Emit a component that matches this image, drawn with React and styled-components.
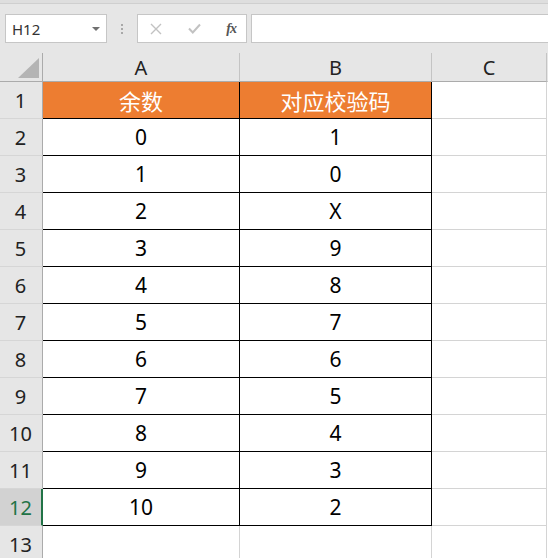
import styled, { createGlobalStyle } from 'styled-components';

const GlobalStyle = createGlobalStyle`
  html, body {
    margin: 0;
    padding: 0;
    background: #e6e6e6;
    overflow: hidden;
  }
  body {
    font-family: "Noto Sans", "Noto Sans CJK SC", sans-serif;
  }
`;

const Page = styled.div`
  width: 548px;
  height: 558px;
  background: #e6e6e6;
  overflow: hidden;
`;

const TopStrip = styled.div`
  height: 3px;
  background: #dedede;
  border-bottom: 1px solid #cfcfcf;
`;

const FormulaBar = styled.div`
  display: flex;
  align-items: center;
  height: 29px;
  padding: 10px 0 10px 5px;
`;

const NameBox = styled.div`
  box-sizing: border-box;
  width: 102px;
  height: 29px;
  background: #fff;
  border: 1px solid #c6c6c6;
  display: flex;
  align-items: center;
  justify-content: space-between;
  padding: 0 6px 0 6px;
  font-size: 15px;
  color: #333;
`;

const Caret = styled.span`
  width: 0;
  height: 0;
  border-left: 4px solid transparent;
  border-right: 4px solid transparent;
  border-top: 4px solid #707070;
`;

const Dots = styled.div`
  width: 30px;
  display: flex;
  flex-direction: column;
  align-items: center;
  gap: 2px;
  span {
    width: 2px;
    height: 2px;
    background: #a8a8a8;
  }
`;

const FxBox = styled.div`
  box-sizing: border-box;
  width: 110px;
  height: 29px;
  background: #fff;
  border: 1px solid #c6c6c6;
  display: flex;
  align-items: center;
  justify-content: space-between;
  padding: 0 10px 0 12px;
`;

const Fx = styled.span`
  font-family: "Liberation Serif", serif;
  font-style: italic;
  font-weight: bold;
  font-size: 14px;
  color: #555;
  letter-spacing: -1px;
`;

const FormulaInput = styled.div`
  box-sizing: border-box;
  flex: 1;
  height: 29px;
  margin-left: 4px;
  background: #fff;
  border: 1px solid #c6c6c6;
  border-right: none;
`;

const Sheet = styled.div`
  display: grid;
  grid-template-columns: 43px 197px 192px 115px 1fr;
  grid-auto-rows: 37px;
  grid-template-rows: 29px;
  background: #fff;
`;

const ColHead = styled.div`
  box-sizing: border-box;
  background: #e6e6e6;
  border-bottom: 1px solid #ababab;
  border-right: 1px solid ${p => (p.$last ? 'transparent' : '#c4c4c4')};
  display: flex;
  align-items: center;
  justify-content: center;
  font-size: 20px;
  color: #222;
  position: relative;
`;

const Corner = styled(ColHead)`
  border-right: 1px solid #ababab;
  &::after {
    content: '';
    position: absolute;
    right: 3px;
    bottom: 3px;
    width: 0;
    height: 0;
    border-left: 21px solid transparent;
    border-bottom: 20px solid #b4b4b4;
  }
`;

const RowHead = styled.div`
  box-sizing: border-box;
  background: ${p => (p.$active ? '#d2d2d2' : '#e6e6e6')};
  border-right: ${p => (p.$active ? '2px solid #217346' : '1px solid #ababab')};
  border-bottom: 1px solid #d6d6d6;
  display: flex;
  align-items: center;
  justify-content: center;
  font-size: 20px;
  color: ${p => (p.$active ? '#217346' : '#222')};
  padding-right: ${p => (p.$active ? '0' : '1px')};
`;

const Cell = styled.div`
  box-sizing: border-box;
  background: ${p => (p.$head ? '#ed7d31' : '#fff')};
  color: ${p => (p.$head ? '#fff' : '#000')};
  border-right: 1px solid ${p => (p.$boxed ? '#000' : '#d4d4d4')};
  border-bottom: 1px solid ${p => (p.$boxed ? '#000' : '#d4d4d4')};
  display: flex;
  align-items: center;
  justify-content: center;
  font-size: ${p => (p.$head ? '22px' : '21px')};
  font-family: "Noto Sans", "Noto Sans CJK SC", sans-serif;
`;

const Filler = styled.div`
  background: #fff;
`;

const rows = [
  ['余数', '对应校验码'],
  ['0', '1'],
  ['1', '0'],
  ['2', 'X'],
  ['3', '9'],
  ['4', '8'],
  ['5', '7'],
  ['6', '6'],
  ['7', '5'],
  ['8', '4'],
  ['9', '3'],
  ['10', '2'],
];

function App() {
  return (
    <Page>
      <GlobalStyle />
      <TopStrip />
      <FormulaBar>
        <NameBox>
          H12
          <Caret />
        </NameBox>
        <Dots>
          <span />
          <span />
          <span />
        </Dots>
        <FxBox>
          <svg width="12" height="12" viewBox="0 0 12 12">
            <path d="M1 1 L11 11 M11 1 L1 11" stroke="#c2c2c2" strokeWidth="1.4" fill="none" />
          </svg>
          <svg width="13" height="11" viewBox="0 0 13 11">
            <path d="M1 5.5 L4.8 9.5 L12 1.5" stroke="#c2c2c2" strokeWidth="2" fill="none" />
          </svg>
          <Fx>fx</Fx>
        </FxBox>
        <FormulaInput />
      </FormulaBar>
      <Sheet>
        <Corner />
        <ColHead>A</ColHead>
        <ColHead>B</ColHead>
        <ColHead>C</ColHead>
        <ColHead $last />
        {rows.map((r, i) => [
          <RowHead key={`h${i}`} $active={i === 11}>{i + 1}</RowHead>,
          <Cell key={`a${i}`} $boxed $head={i === 0}>{r[0]}</Cell>,
          <Cell key={`b${i}`} $boxed $head={i === 0}>{r[1]}</Cell>,
          <Cell key={`c${i}`} />,
          <Filler key={`f${i}`} />,
        ])}
        <RowHead>13</RowHead>
        <Cell />
        <Cell />
        <Cell />
        <Filler />
      </Sheet>
    </Page>
  );
}

export default App;
